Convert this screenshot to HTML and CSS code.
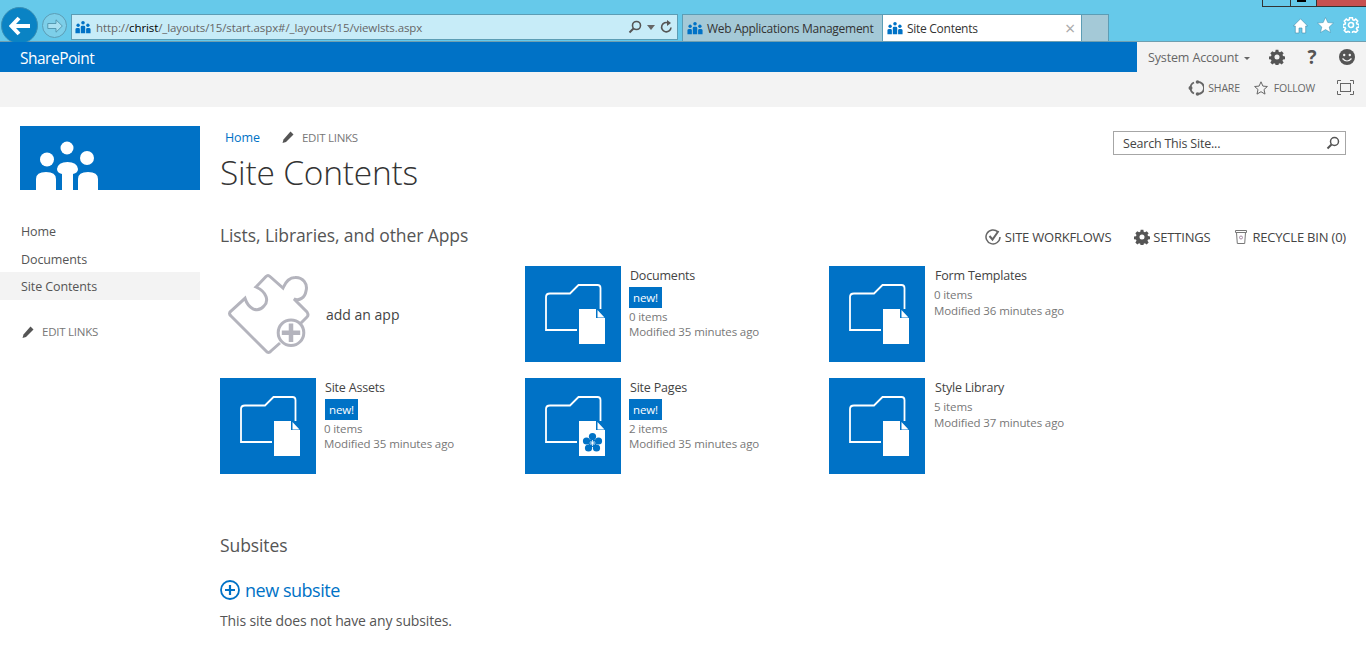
FILE: index.html
```html
<!DOCTYPE html>
<html lang="en">
<head>
<meta charset="utf-8">
<title>Site Contents</title>
<link rel="stylesheet" href="styles.css">
</head>
<body>
<svg class="defs" width="0" height="0" aria-hidden="true">
  <defs>
    <symbol id="people" viewBox="0 0 18 14">
      <circle cx="3.500" cy="5" r="1.900"/><circle cx="9" cy="2.200" r="2"/><circle cx="14.500" cy="5" r="1.900"/>
      <path d="M.5 14V9.500Q.5 8 2.500 8H4Q5.500 8 5.500 9.500V14zM6.500 14V7Q6.500 5.500 8 5.500H10Q11.500 5.500 11.500 7V14zM12.500 14V9.500Q12.500 8 14 8H15.500Q17.500 8 17.500 9.500V14z"/>
    </symbol>
    <symbol id="gear" viewBox="0 0 16 16">
      <path fill-rule="evenodd" d="M6.500 0h3l.4 2.200 1.400.6 1.900-1.300 2.200 2.200-1.300 1.900.6 1.400 2.300.4v3l-2.300.4-.6 1.400 1.300 1.900-2.200 2.200-1.900-1.300-1.400.6-.4 2.300h-3l-.4-2.300-1.400-.6-1.900 1.300-2.200-2.200 1.300-1.900-.6-1.400L-1 10.500v-3l2.300-.4.600-1.400L.6 3.700l2.200-2.200 1.900 1.300 1.400-.6zM8 5.200a2.800 2.800 0 1 0 0 5.600 2.800 2.800 0 0 0 0-5.600z" transform="translate(.8 .8) scale(.9)"/>
    </symbol>
    <symbol id="pencil" viewBox="0 0 12 12">
      <path d="M8.500.5l3 3-7.500 7.500-3.500 1 1-3.500z"/>
    </symbol>
    <symbol id="folder" viewBox="0 0 96 96">
      <path d="M52 64H21V31Q21 27.500 25 27.500H45L53.500 19H72.500Q75.500 19 75.500 22V46" fill="none" stroke="#fff" stroke-width="1.800"/>
      <path d="M70.500 43H80V51.500H70.500z" fill="#0072c6"/>
      <path d="M54 52H80V78H54zM54 43H71V52H54zM72.500 44L79.500 51.500H72.500z" fill="#fff"/>
    </symbol>
  </defs>
</svg>

<header class="chrome">
  <div class="win-controls"><span class="win-btn"></span><span class="win-btn win-max"></span><span class="win-close"></span></div>
  <div class="nav-buttons">
    <span class="back">
      <svg width="22" height="20" viewBox="0 0 22 20"><path d="M10 2L2.500 10 10 18M3 10H21" fill="none" stroke="#fff" stroke-width="4"/></svg>
    </span>
    <span class="forward">
      <svg width="16" height="14" viewBox="0 0 16 14"><path d="M9 .8L15.300 7 9 13.200V9.500H.8V4.500H9z" fill="#a9e0f1" stroke="#4f94ad" stroke-width=".9"/></svg>
    </span>
  </div>
  <div class="address">
    <svg class="fav" width="16" height="14"><use href="#people"/></svg>
    <span class="url">http://<b>christ</b>/_layouts/15/start.aspx#/_layouts/15/viewlsts.aspx</span>
    <span class="addr-tools">
      <svg width="14" height="14" viewBox="0 0 14 14"><circle cx="8.500" cy="5.500" r="4" fill="none" stroke="#555" stroke-width="1.600"/><path d="M5.500 8.500L1.500 12.500" stroke="#555" stroke-width="2"/></svg>
      <svg width="8" height="5" viewBox="0 0 8 5"><path d="M0 0h8L4 5z" fill="#666"/></svg>
      <svg width="13" height="14" viewBox="0 0 13 14"><path d="M11 7.500A4.700 4.700 0 1 1 8.500 3" fill="none" stroke="#555" stroke-width="1.600"/><path d="M7 0l4 3-4 3z" fill="#555"/></svg>
    </span>
  </div>
  <div class="tabs">
    <div class="tab"><svg class="fav" width="16" height="14"><use href="#people"/></svg><span>Web Applications Management</span></div>
    <div class="tab tab-active"><svg class="fav" width="16" height="14"><use href="#people"/></svg><span>Site Contents</span><span class="tab-x">×</span></div>
    <div class="tab tab-new"></div>
  </div>
  <div class="chrome-tools">
    <svg class="chrome-home" width="15" height="16" viewBox="0 0 15 16"><path d="M7.500 .8L14.700 8H12.700V15H9V10H6V15H2.300V8H.3z" fill="#fff" stroke="#3f8aa8" stroke-width=".6"/></svg>
    <svg width="17" height="16" viewBox="0 0 17 16"><path d="M8.500 .5l2.300 5 5.700.6-4.300 3.900 1.300 5.500-5-2.900-5 2.900L4.800 10 .5 6.100l5.700-.6z" fill="#fff" stroke="#3f8aa8" stroke-width=".5"/></svg>
    <svg class="chrome-gear" width="16" height="16"><use href="#gear"/></svg>
  </div>
</header>

<div class="suite">
  <div class="brand">SharePoint</div>
  <div class="user">
    <span class="user-name">System Account</span><span class="caret"></span>
    <svg class="user-gear" width="16" height="16"><use href="#gear"/></svg>
    <span class="help">?</span>
    <svg class="smiley" width="16" height="16" viewBox="0 0 16 16"><circle cx="8" cy="8" r="8" fill="#555"/><circle cx="5.200" cy="6" r="1.200" fill="#f3f3f3"/><circle cx="10.800" cy="6" r="1.200" fill="#f3f3f3"/><path d="M3.500 9.500Q8 14.500 12.500 9.500" fill="none" stroke="#f3f3f3" stroke-width="1.200"/></svg>
  </div>
</div>

<div class="ribbon">
  <span class="rib-item rib-share">
    <svg width="16" height="16" viewBox="0 0 16 16"><path d="M10 2A6 6 0 0 1 10 14M2.500 8A6 6 0 0 1 6 2.500M2.500 8A6 6 0 0 0 6 13.500" fill="none" stroke="#666" stroke-width="1.800"/><circle cx="2.500" cy="8" r="2" fill="#666"/><circle cx="9.500" cy="2" r="1.800" fill="#666"/><circle cx="9.500" cy="14" r="1.800" fill="#666"/></svg>
    SHARE
  </span>
  <span class="rib-item rib-follow">
    <svg width="14" height="14" viewBox="0 0 14 14"><path d="M7 .8l1.900 4.300 4.500.4-3.400 3 1 4.600L7 10.700l-4 2.400 1-4.600-3.400-3 4.500-.4z" fill="none" stroke="#666"/></svg>
    FOLLOW
  </span>
  <svg class="focus" width="17" height="15" viewBox="0 0 17 15"><path d="M.5 4V.5H4M13 .5h3.500V4M16.500 11v3.500H13M4 14.500H.5V11" fill="none" stroke="#666"/><rect x="3.500" y="3.500" width="10" height="8" fill="none" stroke="#666"/></svg>
</div>

<div class="page">
  <aside class="side">
    <div class="logo">
      <svg width="62" height="49" viewBox="0 0 62 49" fill="#fff">
        <circle cx="11" cy="18.500" r="7"/><circle cx="31" cy="7" r="6.500"/><circle cx="51" cy="17" r="7"/>
        <path d="M0 49V38Q0 31 10 31Q20 31 20 38V49zM26 49V33Q21 32 21 28Q22 21 31.500 21Q41 21 42 28Q42 32 37 33V49zM42 49V38Q42 31 52 31Q62 31 62 38V49z"/>
      </svg>
    </div>
    <nav class="quick">
      <a class="q-link">Home</a>
      <a class="q-link">Documents</a>
      <a class="q-link q-current">Site Contents</a>
    </nav>
    <div class="edit side-edit"><svg width="12" height="12"><use href="#pencil"/></svg>EDIT LINKS</div>
  </aside>

  <main class="main">
    <div class="top">
      <div>
        <div class="crumbs"><a class="crumb">Home</a><span class="edit"><svg width="12" height="12"><use href="#pencil"/></svg>EDIT LINKS</span></div>
        <h1>Site Contents</h1>
      </div>
      <div class="search"><span>Search This Site...</span>
        <svg width="14" height="14" viewBox="0 0 14 14"><circle cx="8.500" cy="5.500" r="4" fill="none" stroke="#555" stroke-width="1.500"/><path d="M5.500 8.500L1.500 12.500" stroke="#555" stroke-width="2"/></svg>
      </div>
    </div>

    <div class="apps-head">
      <h2>Lists, Libraries, and other Apps</h2>
      <div class="actions">
        <span class="act act-wf"><svg width="16" height="16" viewBox="0 0 16 16"><path d="M13 3A7 7 0 1 0 15 8" fill="none" stroke="#666" stroke-width="1.500"/><path d="M4.500 7l3 3.500L13.500 2" fill="none" stroke="#666" stroke-width="2"/></svg>SITE WORKFLOWS</span>
        <span class="act act-set"><svg width="16" height="16"><use href="#gear"/></svg>SETTINGS</span>
        <span class="act act-bin"><svg width="12" height="15" viewBox="0 0 12 15"><path d="M.5 1.500h11v2h-11zM1.500 3.500l.8 11h7.400l.8-11" fill="none" stroke="#777"/><circle cx="6" cy="8.500" r="1.500" fill="none" stroke="#a58aa5"/></svg>RECYCLE BIN (0)</span>
      </div>
    </div>

    <div class="tiles">
      <div class="tile add-app">
        <svg width="96" height="96" viewBox="0 0 96 96">
          <path d="M60 77L51 85Q48.500 88 46 85L11 50Q8 47.500 11 45L25 32.300C28 42 37 48 44 40C49 35 47 26 36 21L46 10.500Q48 8.500 50 10.500L63 22C66 15 70 11.500 75 11.500C83 11 88 18 86 25C85 32 79 35 74 33L87 46Q89 49 87 51L80 58" fill="none" stroke="#b4b4bd" stroke-width="3"/>
          <circle cx="71" cy="66.700" r="12.800" fill="#fff" stroke="#b4b4bd" stroke-width="3"/>
          <path d="M71 57.500v18.400M61.800 66.700h18.400" stroke="#b4b4bd" stroke-width="4.500"/>
        </svg>
        <span class="add-label">add an app</span>
      </div>
      <div class="tile">
        <div class="thumb"><svg width="96" height="96"><use href="#folder"/></svg></div>
        <div class="info"><div class="t-name">Documents</div><div class="new">new!</div><div class="meta">0 items</div><div class="meta">Modified 35 minutes ago</div></div>
      </div>
      <div class="tile">
        <div class="thumb"><svg width="96" height="96"><use href="#folder"/></svg></div>
        <div class="info"><div class="t-name">Form Templates</div><div class="meta">0 items</div><div class="meta">Modified 36 minutes ago</div></div>
      </div>
      <div class="tile">
        <div class="thumb"><svg width="96" height="96"><use href="#folder"/></svg></div>
        <div class="info"><div class="t-name">Site Assets</div><div class="new">new!</div><div class="meta">0 items</div><div class="meta">Modified 35 minutes ago</div></div>
      </div>
      <div class="tile">
        <div class="thumb"><svg width="96" height="96" viewBox="0 0 96 96"><use href="#folder"/>
          <g fill="#0072c6"><circle cx="67.500" cy="58.500" r="3.600"/><circle cx="61.500" cy="63" r="3.600"/><circle cx="73.500" cy="63" r="3.600"/><circle cx="63.500" cy="70" r="3.600"/><circle cx="71.500" cy="70" r="3.600"/><circle cx="67.500" cy="65" r="4"/></g>
          <path d="M67.500 62v6M64.500 65h6M65.500 63l4 4M69.500 63l-4 4" stroke="#fff" stroke-width=".8"/>
        </svg></div>
        <div class="info"><div class="t-name">Site Pages</div><div class="new">new!</div><div class="meta">2 items</div><div class="meta">Modified 35 minutes ago</div></div>
      </div>
      <div class="tile">
        <div class="thumb"><svg width="96" height="96"><use href="#folder"/></svg></div>
        <div class="info"><div class="t-name">Style Library</div><div class="meta">5 items</div><div class="meta">Modified 37 minutes ago</div></div>
      </div>
    </div>

    <section class="subsites">
      <h2>Subsites</h2>
      <a class="new-sub"><svg width="20" height="20" viewBox="0 0 20 20"><circle cx="10" cy="10" r="9" fill="none" stroke="#0072c6" stroke-width="1.800"/><path d="M10 5v10M5 10h10" stroke="#0072c6" stroke-width="2.200"/></svg>new subsite</a>
      <p class="no-sub">This site does not have any subsites.</p>
    </section>
  </main>
</div>
</body>
</html>
```
FILE: styles.css
```css
* { box-sizing: border-box; }
html, body { margin: 0; padding: 0; height: 671px; overflow: hidden; }
body { font-family: "Open Sans", "Noto Sans", sans-serif; color: #444; background: #fff; font-size: 12px; }
.defs { display: block; height: 0; }
h1, h2, p { margin: 0; font-weight: 400; }

.chrome { position: relative; height: 42px; background: #66c9ea; border-bottom: 1px solid #6f9fb0; display: flex; padding-top: 14px; }
.win-controls { position: absolute; right: 0; top: 0; display: flex; height: 7px; border: 1px solid #333; border-top: 0; border-right: 0; }
.win-btn { width: 28px; border-right: 1px solid #333; }
.win-max { width: 26px; position: relative; }
.win-max::after { content: ""; position: absolute; left: 6px; width: 9px; top: 0; height: 2px; background: #000; }
.win-close { width: 49px; background: #c75050; }

.nav-buttons { position: relative; width: 71px; height: 27px; display: flex; align-items: flex-start; }
.back { margin: -7px 0 0 1px; width: 37px; height: 37px; border-radius: 50%; background: #0a83c4; border: 1px solid #3a8fb5; display: flex; align-items: center; justify-content: center; clip-path: inset(0 0 2px 0); }
.forward { margin: -1px 0 0 4px; width: 25px; height: 25px; border-radius: 50%; border: 1px solid #5c9db5; background: #7dcfe9; display: flex; align-items: center; justify-content: center; }
.address { width: 607px; height: 26px; background: #c7ecf8; border: 1px solid #5c9db5; display: flex; align-items: center; padding: 0 4px 0 3px; }
.fav { fill: #0072c6; flex: none; }
.url { margin-left: 5px; font-size: 11.500px; color: #666; flex: 1; white-space: nowrap; letter-spacing: -.1px; }
.url b { font-weight: 400; color: #000; }
.addr-tools { display: flex; align-items: center; gap: 5px; }
.tabs { display: flex; margin-left: 4px; height: 27px; border: 1px solid #5c9db5; border-bottom: 0; }
.tab { width: 199px; background: #a4c9d7; display: flex; align-items: center; padding-left: 4px; gap: 4px; font-size: 12px; color: #333; letter-spacing: -.28px; white-space: nowrap; }
.tab-active { width: 200px; background: #fff; border-left: 1px solid #5c9db5; border-right: 1px solid #5c9db5; padding-right: 6px; }
.tab-active span:nth-of-type(1) { flex: 1; }
.tab-x { color: #aaa; font-size: 18px; line-height: 18px; }
.tab-new { width: 26px; padding: 0; }
.chrome-tools { margin-left: auto; display: flex; gap: 9px; padding: 3px 7px 0 0; align-items: flex-start; }
.chrome-home { margin-top: 1px; }
.chrome-gear { fill: #66c9ea; stroke: #fff; stroke-width: 1.800; }

.suite { height: 30px; background: #0072c6; display: flex; justify-content: space-between; }
.brand { color: #fff; font-size: 15.500px; line-height: 32px; padding-left: 20px; letter-spacing: -.5px; }
.user { width: 229px; background: #f3f3f3; display: flex; align-items: center; padding-left: 11px; color: #666; font-size: 12.500px; letter-spacing: -.14px; }
.user-name { white-space: nowrap; }
.caret { margin: 2px 0 0 5px; border: 3px solid transparent; border-top-color: #666; border-bottom: 0; }
.user-gear { fill: #555; margin-left: 19px; }
.help { margin-left: 23px; width: 14px; font-size: 19px; font-weight: 700; color: #555; line-height: 20px; }
.smiley { margin-left: 17px; }

.ribbon { height: 35px; background: #f3f3f3; display: flex; justify-content: flex-end; align-items: center; padding: 0 12px 4px 0; }
.rib-item { display: flex; align-items: center; gap: 4px; font-size: 10.500px; color: #666; letter-spacing: -.2px; margin-right: 14px; }
.rib-follow { gap: 6px; margin-right: 17px; }
.focus { margin-left: 5px; }

.page { display: flex; }
.side { width: 200px; padding-top: 19px; flex: none; }
.logo { margin-left: 20px; height: 64px; background: #0072c6; display: flex; align-items: flex-end; padding-left: 16px; }
.quick { margin-top: 27px; display: flex; flex-direction: column; }
.q-link { height: 27.500px; padding: 1px 0 0 21px; line-height: 27px; font-size: 12.500px; color: #555; letter-spacing: -.1px; }
.q-current { background: #f3f3f3; }
.edit { display: flex; align-items: center; gap: 8px; font-size: 11.500px; color: #777; letter-spacing: -.25px; }
.edit svg { fill: #555; }
.side-edit { margin: 24px 0 0 22px; height: 16px; }

.main { flex: 1; padding-left: 20px; padding-right: 20px; }
.top { display: flex; justify-content: space-between; padding-top: 21px; }
.crumbs { display: flex; align-items: center; padding-left: 5px; height: 18px; }
.crumb { color: #0072c6; font-size: 12.500px; letter-spacing: -.1px; margin-right: 22px; }
h1 { font-size: 33.500px; line-height: 42px; color: #333; font-weight: 300; margin-top: 5px; letter-spacing: -.2px; }
.search { width: 233px; height: 24px; margin-top: 3px; border: 1px solid #a6a6a6; display: flex; align-items: center; justify-content: space-between; padding: 0 5px 0 9px; font-size: 12.500px; color: #444; letter-spacing: -.2px; }

.apps-head { display: flex; justify-content: space-between; margin-top: 29px; height: 44px; }
h2 { font-size: 17.500px; line-height: 27px; color: #555; letter-spacing: -.09px; }
.actions { display: flex; align-items: center; padding-top: 2px; height: 27px; font-size: 13px; color: #444; letter-spacing: -.2px; }
.act { display: flex; align-items: center; white-space: nowrap; gap: 4px; }
.act svg { fill: #555; }
.act-set { margin-left: 23px; gap: 3px; }
.act-bin { margin-left: 25px; gap: 5px; }

.tiles { display: grid; grid-template-columns: 305px 304px 304px; grid-auto-rows: 96px; row-gap: 16px; margin-top: 0; }
.tile { display: flex; }
.add-app { align-items: center; }
.add-label { margin-left: 10px; font-size: 14px; color: #444; letter-spacing: 0; }
.thumb { width: 96px; height: 96px; background: #0072c6; flex: none; }
.thumb svg { display: block; }
.info { margin-left: 8px; }
.tile:nth-child(3n) .info { margin-left: 9px; }
.tile:nth-child(4) .new { margin-left: 1px; }
.t-name { font-size: 12.500px; line-height: 20px; color: #444; padding-left: 1px; letter-spacing: -.2px; }
.new { display: table; background: #0072c6; color: #fff; font-size: 11.500px; line-height: 21px; padding: 0 4px; margin-top: 1px; letter-spacing: -.1px; }
.meta { font-size: 11.500px; line-height: 15px; color: #777; letter-spacing: -.12px; }
.tile .t-name + .meta { margin: 1px 0 1px; }
.new + .meta { margin-top: 1px; }

.subsites { margin-top: 58px; }
.new-sub { display: flex; align-items: center; gap: 5px; margin-top: 18px; font-size: 18px; line-height: 26px; color: #0072c6; letter-spacing: -.47px; }
.no-sub { margin-top: 8px; font-size: 14px; line-height: 20px; color: #555; letter-spacing: -.13px; }
```
